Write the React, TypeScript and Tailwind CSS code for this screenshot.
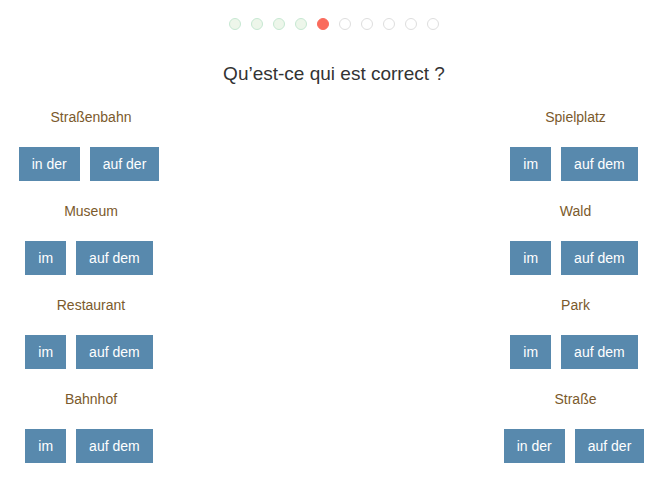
import React from "react";

const left = [
  { label: "Straßenbahn", opts: ["in der", "auf der"] },
  { label: "Museum", opts: ["im", "auf dem"] },
  { label: "Restaurant", opts: ["im", "auf dem"] },
  { label: "Bahnhof", opts: ["im", "auf dem"] },
];
const right = [
  { label: "Spielplatz", opts: ["im", "auf dem"] },
  { label: "Wald", opts: ["im", "auf dem"] },
  { label: "Park", opts: ["im", "auf dem"] },
  { label: "Straße", opts: ["in der", "auf der"] },
];

function Dot({ kind }: { kind: "done" | "cur" | "todo" }) {
  const cls =
    kind === "done"
      ? "bg-[#edf6ea] border border-[#c6e8d2]"
      : kind === "cur"
      ? "bg-[#fa6b5c] border border-[#fa6b5c]"
      : "bg-white border border-[#dedede]";
  return <div className={`w-[12px] h-[12px] rounded-full ${cls}`} />;
}

function Column({ items, width, labelPad }: { items: typeof left; width: string; labelPad: string }) {
  return (
    <div className={`flex flex-col gap-[22px] ${width}`}>
      {items.map((it) => (
        <div key={it.label} className="flex flex-col items-center">
          <div className={`h-[16px] leading-[16px] text-[14px] text-[#7b5a2c] ${labelPad}`}>{it.label}</div>
          <div className="mt-[22px] flex gap-[10px] justify-center">
            {it.opts.map((o) => (
              <button
                key={o}
                className="h-[34px] px-[13px] bg-[#5889ad] text-white text-[14px] leading-[34px]"
              >
                {o}
              </button>
            ))}
          </div>
        </div>
      ))}
    </div>
  );
}

export default function App() {
  const kinds: ("done" | "cur" | "todo")[] = [
    "done", "done", "done", "done", "cur", "todo", "todo", "todo", "todo", "todo",
  ];
  return (
    <div
      className="w-[647px] h-[483px] bg-white overflow-hidden"
      style={{ fontFamily: '"Liberation Sans", Arial, sans-serif' }}
    >
      <div className="pl-[21px] pt-[18px] flex justify-center gap-[10px]">
        {kinds.map((k, i) => (
          <Dot key={i} kind={k} />
        ))}
      </div>
      <div className="pl-[21px] mt-[32px] text-center text-[19px] leading-[24px] text-[#333]">
        Qu’est-ce qui est correct ?
      </div>
      <div className="mt-[23px] flex justify-between">
        <Column items={left} width="w-[178px]" labelPad="pl-[4px]" />
        <Column items={right} width="w-[144px] mr-[1px]" labelPad="pl-[3px]" />
      </div>
    </div>
  );
}
